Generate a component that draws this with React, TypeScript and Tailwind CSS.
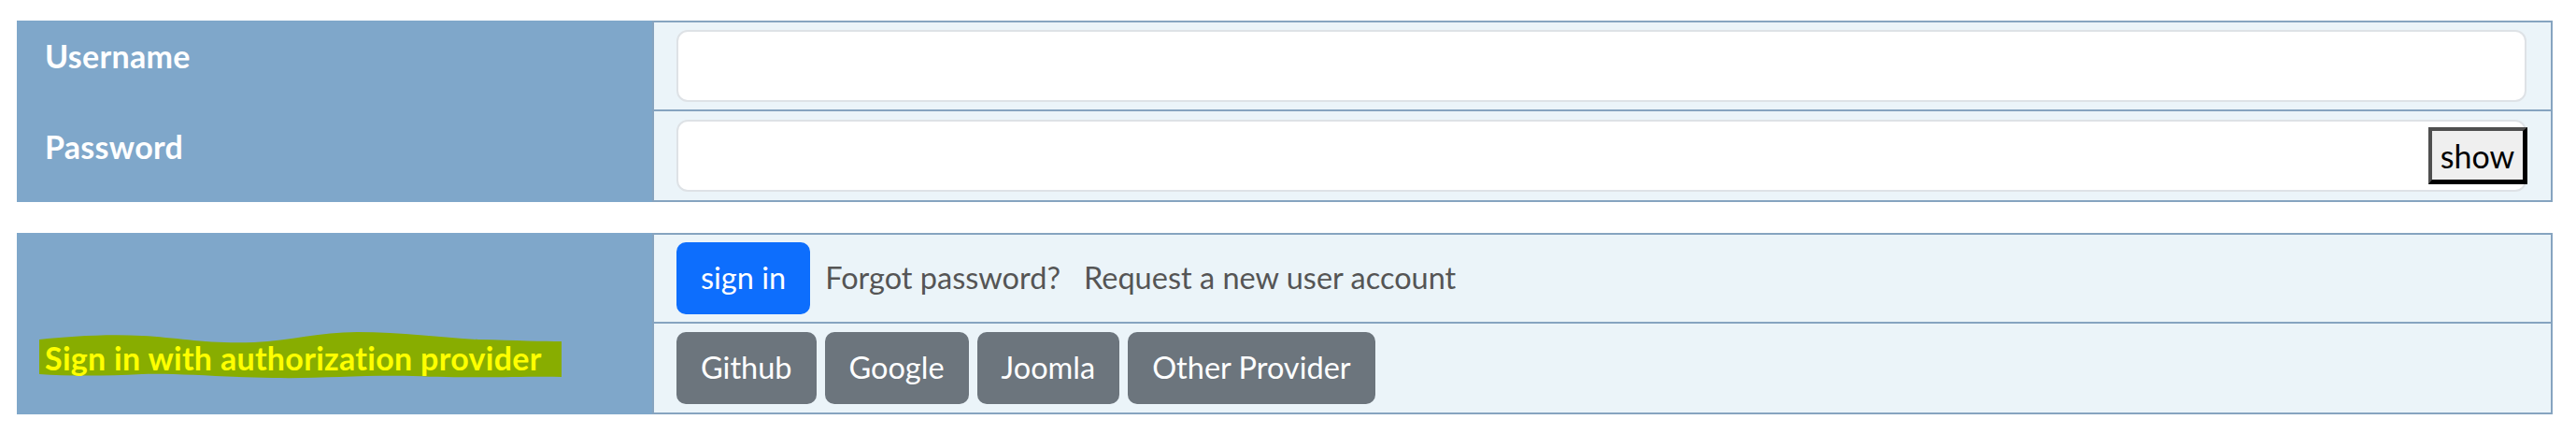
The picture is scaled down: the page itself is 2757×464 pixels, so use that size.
import React from "react";

const font = { fontFamily: "Lato, 'Open Sans', 'Liberation Sans', sans-serif" };

function Highlight() {
  return (
    <svg
      className="absolute left-[-6px] top-[-12px] h-[56px] w-[559px]"
      viewBox="0 0 559 56"
      preserveAspectRatio="none"
    >
      <path
        d="M0 11 C30 8 70 5 110 7 C150 9 180 16 230 14 C270 12 300 3 340 3 C390 3 430 9 470 11 C510 12 540 13 559 13 L559 51 C520 50 470 53 400 50 C340 49 300 53 250 52 C190 51 150 47 110 48 C70 50 30 50 0 48 Z"
        fill="#88ad00"
      />
    </svg>
  );
}

const cell =
  "flex h-[97px] items-center border-2 border-[#86a4c0] bg-[#ebf4f9] pl-[24px] pr-[26px]";

const btn =
  "flex h-[77px] items-center rounded-[10px] px-[26px] text-[32.5px] text-white";

const label = "text-[34px] font-bold leading-[38px] tracking-[0.3px]";

export default function App() {
  return (
    <div
      className="h-[464px] w-[2757px] bg-white pl-[18px] pr-[25px] pt-[22px]"
      style={font}
    >
      {/* login block */}
      <div className="grid grid-cols-[680px_1fr]">
        <div className={"bg-[#7fa7ca] text-white " + label}>
          <div className="h-[97px] pl-[30px] pt-[19px]">Username</div>
          <div className="h-[97px] pl-[30px] pt-[19px]">Password</div>
        </div>
        <div>
          <div className={cell}>
            <div className="h-[77px] flex-1 rounded-[12px] border-2 border-[#dee2e6] bg-white" />
          </div>
          <div className={cell + " -mt-[2px] h-[99px]"}>
            <div className="relative h-[77px] flex-1 rounded-[12px] border-2 border-[#dee2e6] bg-white">
              <button className="absolute right-[-3px] top-[6px] flex h-[61px] w-[106px] items-center justify-center border-[4px] border-b-[5px] border-r-[5px] border-b-black border-l-[#4f4f4f] border-r-black border-t-[#4f4f4f] bg-[#efefef] text-[34px] text-black">
                show
              </button>
            </div>
          </div>
        </div>
      </div>

      {/* sign in block */}
      <div className="mt-[33px] grid grid-cols-[680px_1fr]">
        <div className="bg-[#7fa7ca]">
          <div className="h-[97px]" />
          <div className="h-[97px] pl-[30px] pt-[18px]">
            <span className={"relative inline-block text-[#ffff00] " + label}>
              <Highlight />
              <span className="relative">Sign in with authorization provider</span>
            </span>
          </div>
        </div>
        <div>
          <div className={cell + " text-[32.5px] text-[#555]"}>
            <button className={btn + " bg-[#0d6efd]"}>sign in</button>
            <span className="ml-[16px]">Forgot password?</span>
            <span className="ml-[25px]">Request a new user account</span>
          </div>
          <div className={cell + " -mt-[2px] h-[99px] gap-[9px]"}>
            <button className={btn + " bg-[#6c757d]"}>Github</button>
            <button className={btn + " bg-[#6c757d]"}>Google</button>
            <button className={btn + " bg-[#6c757d]"}>Joomla</button>
            <button className={btn + " bg-[#6c757d]"}>Other Provider</button>
          </div>
        </div>
      </div>
    </div>
  );
}
